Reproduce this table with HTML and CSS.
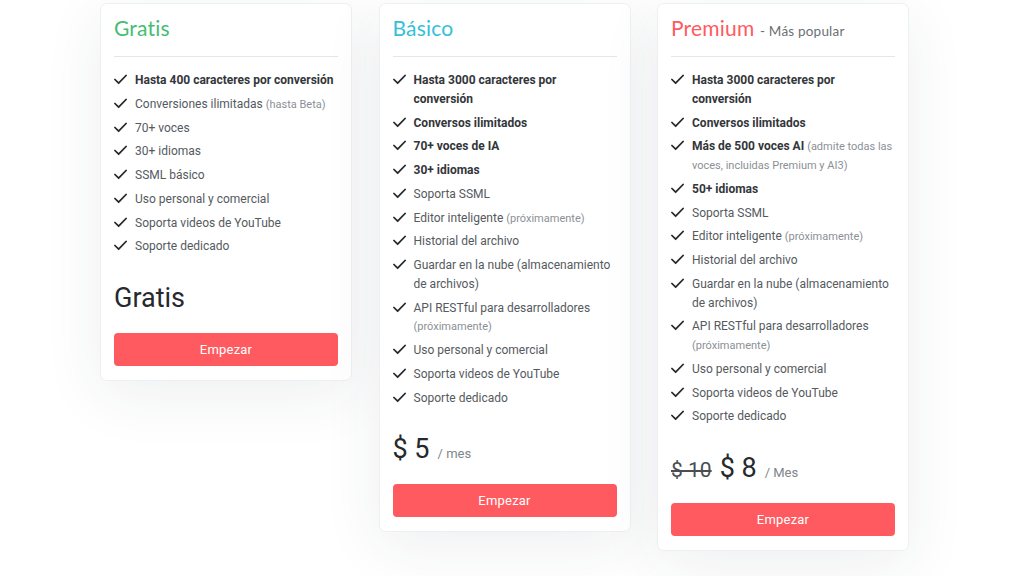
FILE: index.html
```html
<!DOCTYPE html>
<html lang="es">
<head>
<meta charset="utf-8">
<title>Planes</title>
<link rel="stylesheet" href="styles.css">
</head>
<body>
<div class="plans">
  <div class="card">
    <h2 class="title green">Gratis</h2>
    <hr class="divider">
    <ul class="features">
      <li class="b"><svg class="chk" viewBox="0 0 14 11"><polyline points="1,5.5 5,9.5 13,1.2"/></svg><span>Hasta 400 caracteres por conversión</span></li>
      <li><svg class="chk" viewBox="0 0 14 11"><polyline points="1,5.5 5,9.5 13,1.2"/></svg><span>Conversiones ilimitadas <small>(hasta Beta)</small></span></li>
      <li><svg class="chk" viewBox="0 0 14 11"><polyline points="1,5.5 5,9.5 13,1.2"/></svg><span>70+ voces</span></li>
      <li><svg class="chk" viewBox="0 0 14 11"><polyline points="1,5.5 5,9.5 13,1.2"/></svg><span>30+ idiomas</span></li>
      <li><svg class="chk" viewBox="0 0 14 11"><polyline points="1,5.5 5,9.5 13,1.2"/></svg><span>SSML básico</span></li>
      <li><svg class="chk" viewBox="0 0 14 11"><polyline points="1,5.5 5,9.5 13,1.2"/></svg><span>Uso personal y comercial</span></li>
      <li><svg class="chk" viewBox="0 0 14 11"><polyline points="1,5.5 5,9.5 13,1.2"/></svg><span>Soporta videos de YouTube</span></li>
      <li><svg class="chk" viewBox="0 0 14 11"><polyline points="1,5.5 5,9.5 13,1.2"/></svg><span>Soporte dedicado</span></li>
    </ul>
    <div class="price"><span class="amount">Gratis</span></div>
    <button class="btn">Empezar</button>
  </div>

  <div class="card">
    <h2 class="title blue">Básico</h2>
    <hr class="divider">
    <ul class="features">
      <li class="b"><svg class="chk" viewBox="0 0 14 11"><polyline points="1,5.5 5,9.5 13,1.2"/></svg><span>Hasta 3000 caracteres por conversión</span></li>
      <li class="b"><svg class="chk" viewBox="0 0 14 11"><polyline points="1,5.5 5,9.5 13,1.2"/></svg><span>Conversos ilimitados</span></li>
      <li class="b"><svg class="chk" viewBox="0 0 14 11"><polyline points="1,5.5 5,9.5 13,1.2"/></svg><span>70+ voces de IA</span></li>
      <li class="b"><svg class="chk" viewBox="0 0 14 11"><polyline points="1,5.5 5,9.5 13,1.2"/></svg><span>30+ idiomas</span></li>
      <li><svg class="chk" viewBox="0 0 14 11"><polyline points="1,5.5 5,9.5 13,1.2"/></svg><span>Soporta SSML</span></li>
      <li><svg class="chk" viewBox="0 0 14 11"><polyline points="1,5.5 5,9.5 13,1.2"/></svg><span>Editor inteligente <small>(próximamente)</small></span></li>
      <li><svg class="chk" viewBox="0 0 14 11"><polyline points="1,5.5 5,9.5 13,1.2"/></svg><span>Historial del archivo</span></li>
      <li><svg class="chk" viewBox="0 0 14 11"><polyline points="1,5.5 5,9.5 13,1.2"/></svg><span>Guardar en la nube (almacenamiento de archivos)</span></li>
      <li><svg class="chk" viewBox="0 0 14 11"><polyline points="1,5.5 5,9.5 13,1.2"/></svg><span>API RESTful para desarrolladores <small>(próximamente)</small></span></li>
      <li><svg class="chk" viewBox="0 0 14 11"><polyline points="1,5.5 5,9.5 13,1.2"/></svg><span>Uso personal y comercial</span></li>
      <li><svg class="chk" viewBox="0 0 14 11"><polyline points="1,5.5 5,9.5 13,1.2"/></svg><span>Soporta videos de YouTube</span></li>
      <li><svg class="chk" viewBox="0 0 14 11"><polyline points="1,5.5 5,9.5 13,1.2"/></svg><span>Soporte dedicado</span></li>
    </ul>
    <div class="price"><span class="amount">$ 5</span><span class="per">/ mes</span></div>
    <button class="btn">Empezar</button>
  </div>

  <div class="card">
    <h2 class="title red">Premium <span class="tag">- Más popular</span></h2>
    <hr class="divider">
    <ul class="features">
      <li class="b"><svg class="chk" viewBox="0 0 14 11"><polyline points="1,5.5 5,9.5 13,1.2"/></svg><span>Hasta 3000 caracteres por conversión</span></li>
      <li class="b"><svg class="chk" viewBox="0 0 14 11"><polyline points="1,5.5 5,9.5 13,1.2"/></svg><span>Conversos ilimitados</span></li>
      <li class="b"><svg class="chk" viewBox="0 0 14 11"><polyline points="1,5.5 5,9.5 13,1.2"/></svg><span>Más de 500 voces AI <small>(admite todas las voces, incluidas Premium y AI3)</small></span></li>
      <li class="b"><svg class="chk" viewBox="0 0 14 11"><polyline points="1,5.5 5,9.5 13,1.2"/></svg><span>50+ idiomas</span></li>
      <li><svg class="chk" viewBox="0 0 14 11"><polyline points="1,5.5 5,9.5 13,1.2"/></svg><span>Soporta SSML</span></li>
      <li><svg class="chk" viewBox="0 0 14 11"><polyline points="1,5.5 5,9.5 13,1.2"/></svg><span>Editor inteligente <small>(próximamente)</small></span></li>
      <li><svg class="chk" viewBox="0 0 14 11"><polyline points="1,5.5 5,9.5 13,1.2"/></svg><span>Historial del archivo</span></li>
      <li><svg class="chk" viewBox="0 0 14 11"><polyline points="1,5.5 5,9.5 13,1.2"/></svg><span>Guardar en la nube (almacenamiento de archivos)</span></li>
      <li><svg class="chk" viewBox="0 0 14 11"><polyline points="1,5.5 5,9.5 13,1.2"/></svg><span>API RESTful para desarrolladores <small>(próximamente)</small></span></li>
      <li><svg class="chk" viewBox="0 0 14 11"><polyline points="1,5.5 5,9.5 13,1.2"/></svg><span>Uso personal y comercial</span></li>
      <li><svg class="chk" viewBox="0 0 14 11"><polyline points="1,5.5 5,9.5 13,1.2"/></svg><span>Soporta videos de YouTube</span></li>
      <li><svg class="chk" viewBox="0 0 14 11"><polyline points="1,5.5 5,9.5 13,1.2"/></svg><span>Soporte dedicado</span></li>
    </ul>
    <div class="price"><s class="old">$ 10</s><span class="amount">$ 8</span><span class="per">/ Mes</span></div>
    <button class="btn">Empezar</button>
  </div>
</div>
</body>
</html>
```
FILE: styles.css
```css
* { box-sizing: border-box; }
html, body { margin: 0; padding: 0; background: #ffffff; }
body {
  width: 1024px;
  height: 576px;
  overflow: hidden;
  font-family: Roboto, "Liberation Sans", sans-serif;
  color: #555;
}
.plans {
  display: flex;
  align-items: flex-start;
  gap: 26.5px;
  padding: 3px 0 0 100px;
}
.card {
  width: 252px;
  background: #fff;
  border: 1px solid #edf0f3;
  border-radius: 7px;
  box-shadow: 0 14px 60px rgba(40, 50, 70, 0.08);
  padding: 11px 13px 14px 13px;
  display: flex;
  flex-direction: column;
}
.title {
  margin: 0;
  height: 26px;
  font-family: Lato, "Open Sans", sans-serif;
  font-weight: 400;
  font-size: 21px;
  line-height: 26px;
  letter-spacing: 0.2px;
  white-space: nowrap;
}
.green { color: #44bd71; }
.blue { color: #35c0d9; }
.red { color: #ff5a5f; }
.tag {
  font-size: 13.5px;
  line-height: 1;
  color: #6b6f75;
  letter-spacing: 0.2px;
}
.divider {
  border: 0;
  border-top: 1px solid #e4e6e9;
  margin: 15px 0 14px 0;
}
.features {
  list-style: none;
  margin: 0;
  padding: 0;
  display: flex;
  flex-direction: column;
  gap: 5px;
}
.features li {
  display: flex;
  align-items: flex-start;
  gap: 8px;
  font-size: 12px;
  line-height: 18.75px;
  color: #555a60;
}
.features li.b { font-weight: 700; color: #33363a; }
.features small {
  font-size: 11px;
  line-height: 1;
  font-weight: 400;
  color: #8b9096;
}
.chk {
  flex: 0 0 13px;
  width: 13px;
  height: 11px;
  margin-top: 3px;
  fill: none;
  stroke: #25282c;
  stroke-width: 1.9;
  stroke-linecap: round;
  stroke-linejoin: round;
}
.price {
  margin-top: 26px;
  display: flex;
  align-items: baseline;
  height: 32px;
  line-height: 32px;
  color: #26292d;
}
.amount { font-size: 27px; }
.per { font-size: 13px; color: #7f858b; margin-left: 8px; }
.old { font-size: 21px; color: #4a4e53; margin-right: 8px; }
.btn {
  margin-top: 19px;
  height: 33px;
  width: 100%;
  border: 0;
  border-radius: 4px;
  background: #ff5a5f;
  color: #fff;
  font-family: Roboto, "Liberation Sans", sans-serif;
  font-size: 13px;
  font-weight: 400;
  letter-spacing: 0.2px;
}
```
